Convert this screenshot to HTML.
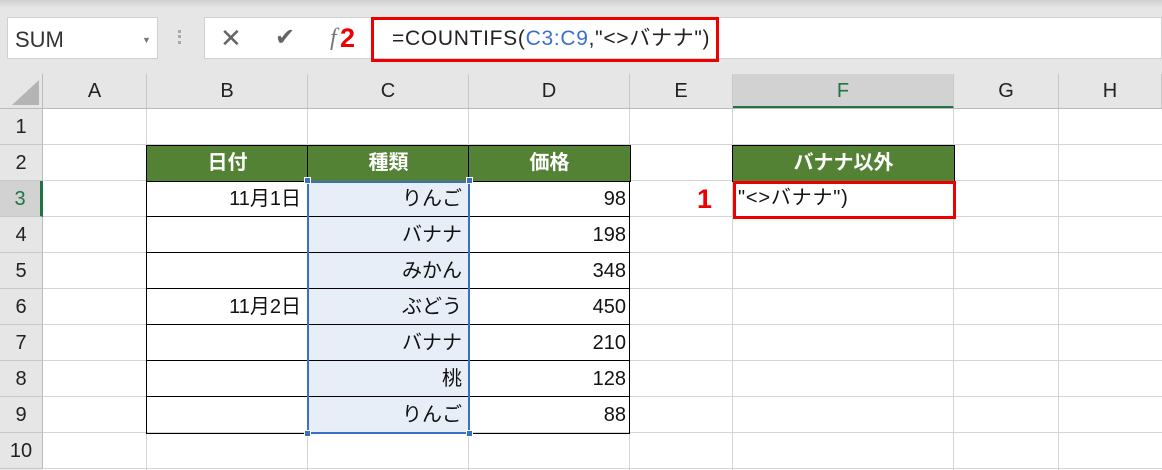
<!DOCTYPE html>
<html><head><meta charset="utf-8"><style>
body{margin:0;width:1162px;height:470px;overflow:hidden;background:#e6e6e6;font-family:"Liberation Sans","Noto Sans CJK JP",sans-serif;position:relative}
div{position:absolute;box-sizing:border-box}
.t{font-size:20px;color:#111;line-height:36px;white-space:nowrap}
.ch{top:74px;height:35px;border-right:1px solid #c8c8c8;text-align:center;font-size:20px;line-height:35px;color:#222}
.rh{left:0;width:43px;height:36px;border-bottom:1px solid #c8c8c8;border-right:1px solid #bbb;text-align:center;font-size:20px;line-height:36px;color:#222;background:#e6e6e6}
.vl{top:109px;height:361px;width:1px;background:#d4d4d4}
.hl{left:43px;width:1119px;height:1px;background:#d4d4d4}
.g{background:#548235;color:#fff;font-weight:bold;text-align:center;font-size:20px;line-height:35px;border:1px solid #000}
.r{text-align:right;padding-right:6px}
</style></head><body>
<div style="left:0;top:0;width:1162px;height:8px;background:linear-gradient(#d0d0d0,#e6e6e6)"></div>
<div style="left:7px;top:17px;width:151px;height:42px;background:#fff;border:1px solid #d0d0d0;font-size:22px;line-height:44px;padding-left:7px;color:#333">SUM<span style="position:absolute;left:134px;top:0;font-size:9px;color:#777">▼</span></div>
<div style="left:178px;top:30px;width:3px;height:14px;border-left:3px dotted #aaa"></div>
<div style="left:204px;top:17px;width:170px;height:42px;background:#fff;border:1px solid #d0d0d0"></div>
<div style="left:220px;top:18px;font-size:26px;line-height:40px;color:#666">✕</div>
<div style="left:275px;top:18px;font-size:24px;line-height:40px;color:#666">✔</div>
<div style="left:330px;top:18px;font-size:24px;line-height:40px;color:#777;font-style:italic;font-family:'Liberation Serif',serif">f</div>
<div style="left:340px;top:18px;font-size:27px;line-height:40px;color:#e00;font-weight:bold">2</div>
<div style="left:372px;top:17px;width:790px;height:42px;background:#fff;border:1px solid #d0d0d0"></div>
<div style="left:371px;top:17px;width:348px;height:45px;border:3px solid #e00"></div>
<div style="left:392px;top:18px;font-size:21px;line-height:42px;color:#222;letter-spacing:0.7px">=COUNTIFS(<span style="color:#3a6fd0">C3:C9</span>,"&lt;&gt;バナナ")</div>
<div style="left:0;top:74px;width:43px;height:35px;background:#e6e6e6;border-right:1px solid #bbb"></div>
<div style="left:12px;top:80px;width:0;height:0;border-left:27px solid transparent;border-bottom:25px solid #b4b4b4"></div>
<div class="ch" style="left:43px;width:104px">A</div>
<div class="ch" style="left:147px;width:161px">B</div>
<div class="ch" style="left:308px;width:161px">C</div>
<div class="ch" style="left:469px;width:161px">D</div>
<div class="ch" style="left:630px;width:103px">E</div>
<div class="ch" style="left:733px;width:221px;background:#d2d2d2;border-bottom:3px solid #217346;color:#217346">F</div>
<div class="ch" style="left:954px;width:105px">G</div>
<div class="ch" style="left:1059px;width:103px">H</div>
<div style="left:0;top:108px;width:1162px;height:1px;background:#bbb"></div>
<div style="left:43px;top:109px;width:1119px;height:361px;background:#fff"></div>
<div class="vl" style="left:146px"></div><div class="vl" style="left:307px"></div><div class="vl" style="left:468px"></div><div class="vl" style="left:629px"></div><div class="vl" style="left:732px"></div><div class="vl" style="left:953px"></div><div class="vl" style="left:1058px"></div>
<div class="hl" style="top:144px"></div><div class="hl" style="top:180px"></div><div class="hl" style="top:216px"></div><div class="hl" style="top:252px"></div><div class="hl" style="top:288px"></div><div class="hl" style="top:324px"></div><div class="hl" style="top:360px"></div><div class="hl" style="top:396px"></div><div class="hl" style="top:432px"></div><div class="hl" style="top:468px"></div>
<div class="rh" style="top:109px">1</div>
<div class="rh" style="top:145px">2</div>
<div class="rh" style="top:181px;background:#d2d2d2;border-right:3px solid #217346;color:#217346">3</div>
<div class="rh" style="top:217px">4</div>
<div class="rh" style="top:253px">5</div>
<div class="rh" style="top:289px">6</div>
<div class="rh" style="top:325px">7</div>
<div class="rh" style="top:361px">8</div>
<div class="rh" style="top:397px">9</div>
<div class="rh" style="top:433px">10</div>
<div style="left:308px;top:181px;width:161px;height:252px;background:#e8eef8"></div>
<div style="left:146px;top:181px;width:484px;height:253px;border:1px solid #000;border-top:none"></div>
<div style="left:146px;top:216px;width:484px;height:1px;background:#000"></div>
<div style="left:146px;top:252px;width:484px;height:1px;background:#000"></div>
<div style="left:146px;top:288px;width:484px;height:1px;background:#000"></div>
<div style="left:146px;top:324px;width:484px;height:1px;background:#000"></div>
<div style="left:146px;top:360px;width:484px;height:1px;background:#000"></div>
<div style="left:146px;top:396px;width:484px;height:1px;background:#000"></div>
<div class="g" style="left:146px;top:145px;width:163px;height:37px">日付</div>
<div class="g" style="left:307px;top:145px;width:163px;height:37px">種類</div>
<div class="g" style="left:468px;top:145px;width:163px;height:37px">価格</div>
<div class="g" style="left:732px;top:145px;width:223px;height:37px">バナナ以外</div>
<div style="left:307px;top:181px;width:163px;height:253px;border:2px solid #3a6fc4"></div>
<div style="left:304px;top:177px;width:7px;height:7px;background:#3a6fc4;border:1px solid #fff"></div>
<div style="left:466px;top:177px;width:7px;height:7px;background:#3a6fc4;border:1px solid #fff"></div>
<div style="left:304px;top:430px;width:7px;height:7px;background:#3a6fc4;border:1px solid #fff"></div>
<div style="left:466px;top:430px;width:7px;height:7px;background:#3a6fc4;border:1px solid #fff"></div>
<div class="t r" style="left:147px;top:181px;width:160px">11月1日</div>
<div class="t r" style="left:147px;top:289px;width:160px">11月2日</div>
<div class="t r" style="left:308px;top:181px;width:160px">りんご</div>
<div class="t r" style="left:308px;top:217px;width:160px">バナナ</div>
<div class="t r" style="left:308px;top:253px;width:160px">みかん</div>
<div class="t r" style="left:308px;top:289px;width:160px">ぶどう</div>
<div class="t r" style="left:308px;top:325px;width:160px">バナナ</div>
<div class="t r" style="left:308px;top:361px;width:160px">桃</div>
<div class="t r" style="left:308px;top:397px;width:160px">りんご</div>
<div class="t r" style="left:469px;top:181px;width:161px;padding-right:4px">98</div>
<div class="t r" style="left:469px;top:217px;width:161px;padding-right:4px">198</div>
<div class="t r" style="left:469px;top:253px;width:161px;padding-right:4px">348</div>
<div class="t r" style="left:469px;top:289px;width:161px;padding-right:4px">450</div>
<div class="t r" style="left:469px;top:325px;width:161px;padding-right:4px">210</div>
<div class="t r" style="left:469px;top:361px;width:161px;padding-right:4px">128</div>
<div class="t r" style="left:469px;top:397px;width:161px;padding-right:4px">88</div>
<div style="left:697px;top:181px;font-size:27px;line-height:36px;color:#e00;font-weight:bold">1</div>
<div style="left:733px;top:181px;width:223px;height:38px;border:3px solid #e00"></div>
<div class="t" style="left:738px;top:180px;letter-spacing:0.8px">"&lt;&gt;バナナ")</div>
</body></html>
